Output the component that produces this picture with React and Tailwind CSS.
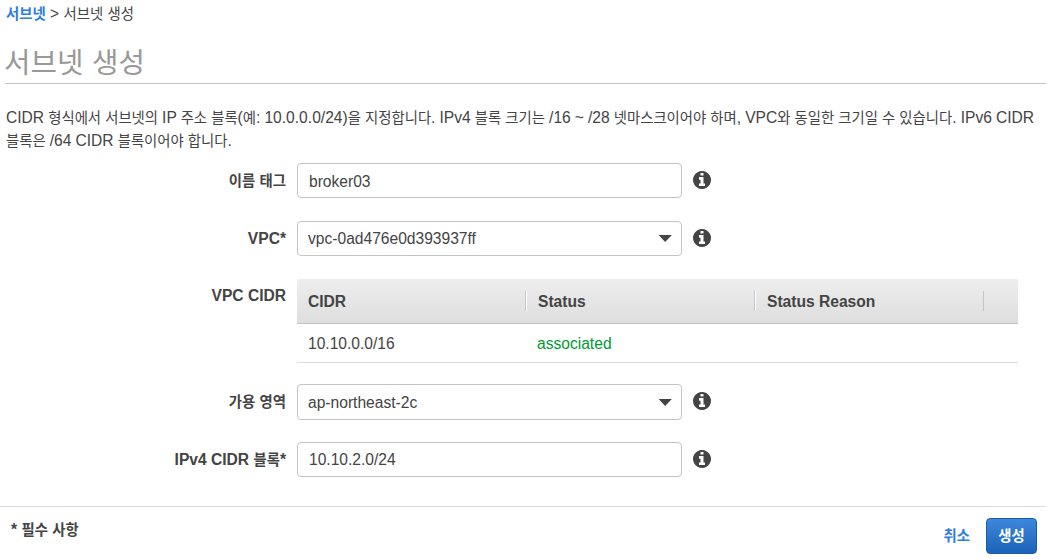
import { useState } from 'react';

// Hangul runs are set slightly smaller than the latin text around them
function Mixed({ text }) {
  return text.split(/([가-힣]+)/).map((part, i) => (
    /[가-힣]/.test(part)
      ? <span key={i} className="text-[0.923em]">{part}</span>
      : part
  ));
}

function Caret() {
  return (
    <svg width="14" height="7" viewBox="0 0 14 7" className="fill-[#444]">
      <path d="M0.6 0h13.2L7.2 6.9z" />
    </svg>
  );
}

function Field({ label, children, className = '', labelClass = 'h-[35px]' }) {
  return (
    <div className={`flex ${className}`}>
      <div className={`w-[286px] shrink-0 flex items-center justify-end mr-[11px] font-bold whitespace-pre ${labelClass}`}>
        <span><Mixed text={label} /></span>
      </div>
      {children}
    </div>
  );
}

function Info() {
  return (
    <svg viewBox="128 128 1536 1536" className="ml-[11px] mt-2 size-[18px] shrink-0 fill-[#444]">
      <path d="M1152 1376v-160q0-14-9-23t-23-9h-96v-512q0-14-9-23t-23-9h-320q-14 0-23 9t-9 23v160q0 14 9 23t23 9h96v320h-96q-14 0-23 9t-9 23v160q0 14 9 23t23 9h448q14 0 23-9t9-23zM1024 480v-160q0-14-9-23t-23-9h-192q-14 0-23 9t-9 23v160q0 14 9 23t23 9h192q14 0 23-9t9-23zM1664 896q0 209-103 385.5t-279.5 279.5-385.5 103-385.5-103-279.5-279.5-103-385.5 103-385.5 279.5-279.5 385.5-103 385.5 103 279.5 279.5 103 385.5z" />
    </svg>
  );
}

function TextInput({ value, onChange, className = '' }) {
  return (
    <input
      type="text"
      value={value}
      onChange={e => onChange(e.target.value)}
      className={`w-[385px] h-[35px] pl-[11px] pr-3 border border-[#c4c4c4] rounded-[4px] bg-white outline-none ${className}`}
    />
  );
}

function Select({ value, className = 'h-[35px]' }) {
  return (
    <button type="button" className={`w-[385px] pl-[10px] pr-[9px] flex items-center justify-between border border-[#c4c4c4] rounded-[4px] bg-white ${className}`}>
      <span>{value}</span>
      <Caret />
    </button>
  );
}

function CidrTable() {
  return (
    <div className="w-[721px]">
      <div className="h-[45px] flex items-center font-bold bg-linear-to-b from-[#eeeeee] to-[#dedede] border-b border-[#c4c4c4]">
        <div className="w-[228px] pl-[11px]">CIDR</div>
        <div className="w-[229px] h-5 pl-[12px] flex items-center border-l border-[#c4c4c4] shadow-[inset_1px_0_#fff]">Status</div>
        <div className="w-[229px] h-5 pl-[12px] flex items-center border-l border-[#c4c4c4] shadow-[inset_1px_0_#fff]">Status Reason</div>
        <div className="h-5 border-l border-[#c4c4c4]" />
      </div>
      <div className="h-[39px] flex items-center border-b border-[#dddddd]">
        <div className="w-[229px] pl-[11px]">10.10.0.0/16</div>
        <div className="w-[229px] pl-[11px] text-[#009933]">associated</div>
      </div>
    </div>
  );
}

export default function App() {
  const [name, setName] = useState('broker03');
  const [cidr, setCidr] = useState('10.10.2.0/24');

  return (
    <div className="w-[1047px] h-[559px] overflow-hidden bg-white text-[#444] text-[15.6px] leading-[23px] font-['Liberation_Sans','Noto_Sans_CJK_KR',sans-serif]">
      <nav className="h-[26px] pl-[6px] pt-[2px] whitespace-pre">
        <a href="#" className="font-bold text-[#2e7de0]"><Mixed text="서브넷" /></a>
        <Mixed text=" > 서브넷 생성" />
      </nav>
      <h1 className="ml-[5px] mr-px h-[58px] pt-[18px] border-b border-[#c4c4c4] text-[31.2px] leading-[38px] text-[#999]">
        <span className="-ml-px"><Mixed text="서브넷 생성" /></span>
      </h1>

      <p className="h-[79px] pt-[23px] pl-[6px] leading-[22.5px] whitespace-nowrap [word-spacing:-0.27px]">
        <Mixed text="CIDR 형식에서 서브넷의 IP 주소 블록(예: 10.0.0.0/24)을 지정합니다. IPv4 블록 크기는 /16 ~ /28 넷마스크이어야 하며, VPC와 동일한 크기일 수 있습니다. IPv6 CIDR" />
        <br />
        <Mixed text="블록은 /64 CIDR 블록이어야 합니다." />
      </p>

      <Field label="이름 태그" labelClass="h-[36px]">
        <TextInput value={name} onChange={setName} className="pt-[3px]" />
        <Info />
      </Field>
      <Field label="VPC*" className="mt-[22px]">
        <Select value="vpc-0ad476e0d393937ff" />
        <Info />
      </Field>
      <Field label="VPC CIDR" className="mt-[23px]" labelClass="h-[32px]">
        <CidrTable />
      </Field>
      <Field label="가용 영역" className="mt-[21px]">
        <Select value="ap-northeast-2c" className="h-[36px]" />
        <Info />
      </Field>
      <Field label="IPv4 CIDR 블록*" className="mt-[22px]" labelClass="h-[36px]">
        <TextInput value={cidr} onChange={setCidr} className="pt-px" />
        <Info />
      </Field>

      <footer className="mt-[28px] mr-px h-[53px] pl-[11px] pr-[9px] flex justify-between border-t border-[#dddddd]">
        <div className="pt-[11px] font-bold"><Mixed text="* 필수 사항" /></div>
        <div className="pt-[11px] flex">
          <button type="button" className="h-[36px] mr-[16px] font-bold text-[#2e7de0]"><Mixed text="취소" /></button>
          <button type="button" className="w-[51px] h-[36px] rounded-[4px] border border-[#1c5ba8] bg-linear-to-b from-[#3d87dc] to-[#1b63b8] font-bold text-white"><Mixed text="생성" /></button>
        </div>
      </footer>
    </div>
  );
}
